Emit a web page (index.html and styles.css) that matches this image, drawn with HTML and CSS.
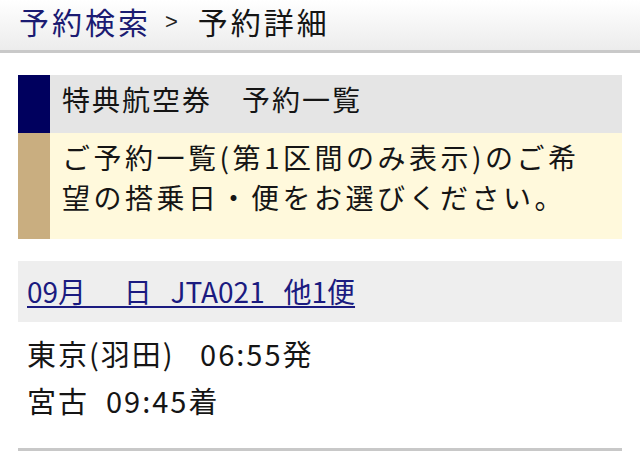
FILE: index.html
```html
<!DOCTYPE html>
<html lang="ja">
<head>
<meta charset="utf-8">
<title>予約詳細</title>
<link rel="stylesheet" href="styles.css">
</head>
<body>
<header class="crumbs">
  <a class="crumb-link" href="#">予約検索</a><span class="crumb-sep">&gt;</span><span class="crumb-current">予約詳細</span>
</header>
<main class="content">
  <section class="notice">
    <div class="notice-title">特典航空券　予約一覧</div>
    <div class="notice-body">ご予約一覧(第1区間のみ表示)のご希望の搭乗日・便をお選びください。</div>
  </section>
  <section class="flight">
    <div class="flight-head"><a class="flight-link" href="#">09月&nbsp;&nbsp;&nbsp;&nbsp;&nbsp;&nbsp;日&nbsp;&nbsp;&nbsp;JTA021&nbsp;&nbsp;&nbsp;他1便</a></div>
    <div class="flight-info">
      <p class="flight-line">東京(羽田)&nbsp;&nbsp;&nbsp;06:55発</p>
      <p class="flight-line">宮古&nbsp;&nbsp;09:45着</p>
    </div>
  </section>
</main>
</body>
</html>
```

FILE: styles.css
```css
html, body {
  margin: 0;
  padding: 0;
  background: #ffffff;
}
body {
  font-family: "Noto Sans CJK JP", "Noto Sans", sans-serif;
  color: #151515;
}
.crumbs {
  display: flex;
  align-items: center;
  height: 50px;
  padding: 0 0 0 19px;
  background: linear-gradient(#ffffff, #ececec);
  border-bottom: 3px solid #c9c9c9;
  font-size: 30px;
  letter-spacing: 3px;
  line-height: 40px;
}
.crumb-link {
  color: #1b1b72;
  text-decoration: none;
  margin-top: -8px;
}
.crumb-sep {
  font-family: "Liberation Sans", sans-serif;
  font-size: 22px;
  letter-spacing: 0;
  margin: -6px 20px 0 14px;
  color: #222;
}
.crumb-current {
  margin-top: -8px;
}
.content {
  padding: 22px 18px 0;
}
.notice-title {
  background: #e5e5e5;
  border-left: 32px solid #00005e;
  padding: 0 12px 10px 12px;
  font-size: 28px;
  letter-spacing: 2px;
  line-height: 48px;
}
.notice-body {
  background: #fff9dc;
  border-left: 32px solid #c9ae80;
  padding: 4px 22px 22px 12px;
  font-size: 28px;
  letter-spacing: 3.5px;
  line-height: 40px;
}
.flight {
  margin-top: 22px;
  border-bottom: 3px solid #c8c8c8;
}
.flight-head {
  background: #eeeeee;
  padding: 0 9px;
  line-height: 61px;
  font-size: 28px;
}
.flight-link {
  color: #1b1b80;
  text-decoration: underline;
  text-underline-offset: 3px;
  text-decoration-thickness: 2px;
}
.flight-info {
  padding: 8px 9px 24px;
}
.flight-line {
  margin: 0;
  font-size: 29px;
  letter-spacing: 2px;
  line-height: 47px;
}
```
